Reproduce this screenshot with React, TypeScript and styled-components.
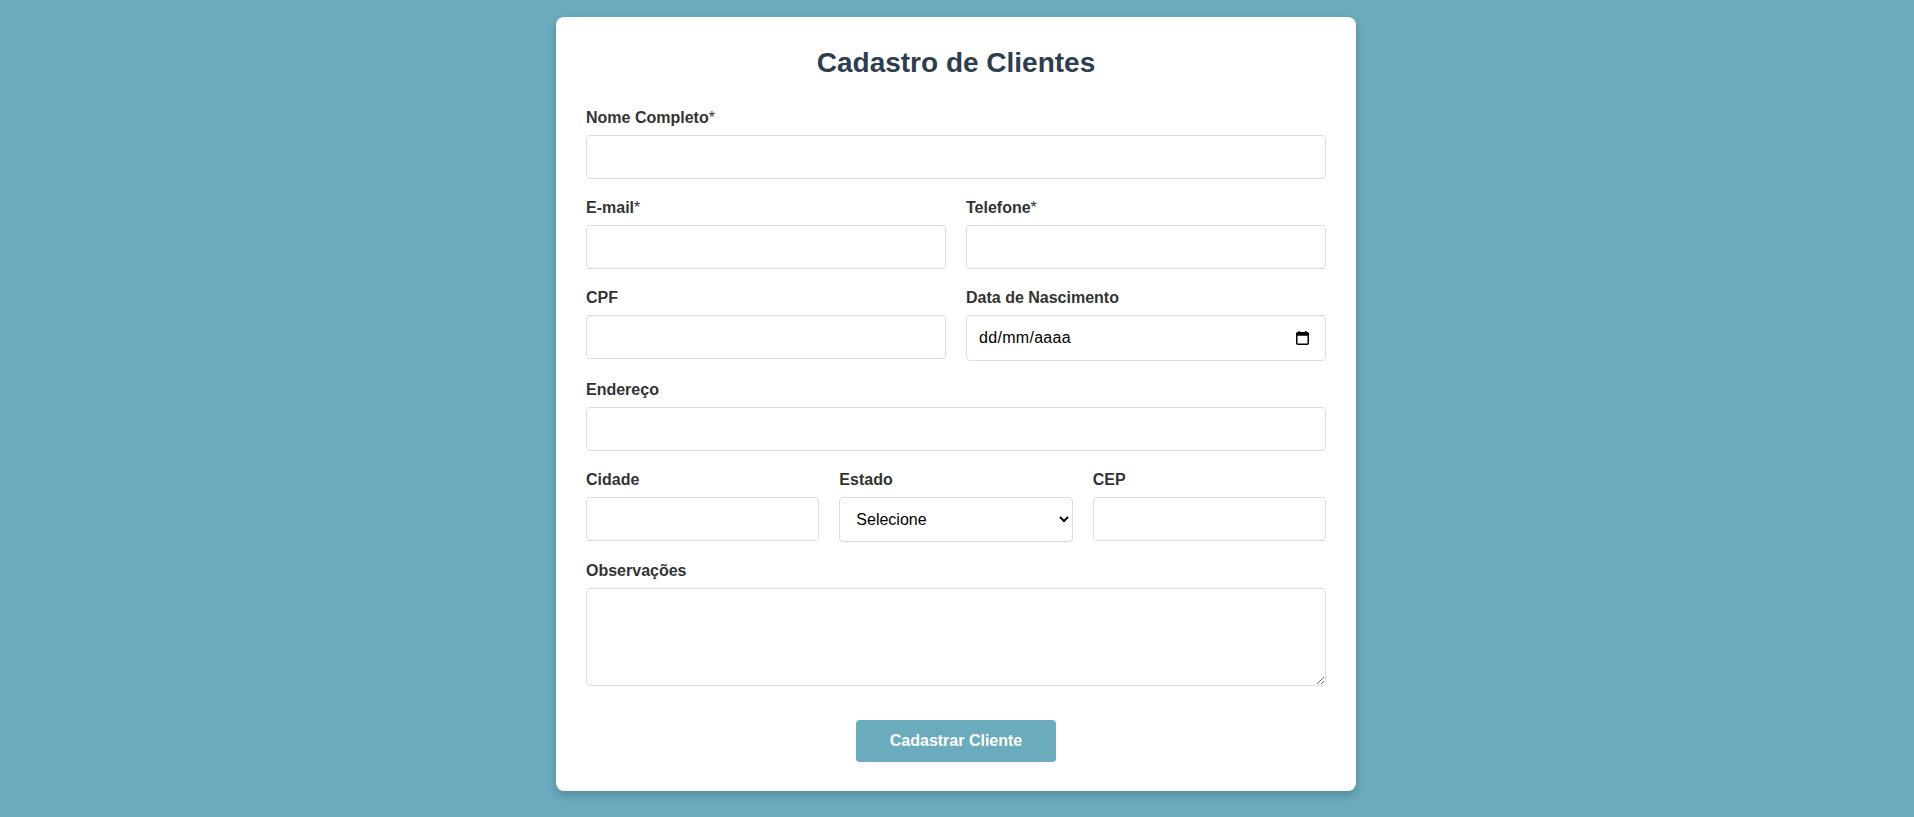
import styled, { createGlobalStyle } from "styled-components";

const GlobalStyle = createGlobalStyle`
  * {
    box-sizing: border-box;
  }
  body {
    margin: 0;
    background-color: #6aabbd;
    font-family: "Liberation Sans", Arial, sans-serif;
  }
`;

type FieldProps = {
  label: string;
  required?: boolean;
  children: React.ReactNode;
};

const Field = ({ label, required, children }: FieldProps) => (
  <Group>
    <Label>
      {label}
      {required && <Asterisk>*</Asterisk>}
    </Label>
    {children}
  </Group>
);

// campo de data com formato pt-BR fixo
const DateInput = () => (
  <DateWrap>
    <Input type="text" placeholder="dd/mm/aaaa" $tall />
    <CalendarIcon viewBox="0 0 13 14" aria-hidden="true">
      <rect x="0.75" y="1.75" width="11.5" height="11.5" rx="1" fill="none" stroke="#000" strokeWidth="1.5" />
      <rect x="0.75" y="1.75" width="11.5" height="3" fill="#000" />
      <rect x="2.5" y="0" width="1.5" height="2.5" fill="#000" />
      <rect x="9" y="0" width="1.5" height="2.5" fill="#000" />
    </CalendarIcon>
  </DateWrap>
);

const estados = ["AC", "AL", "AP", "AM", "BA", "CE", "DF", "ES", "GO", "MA", "MG", "MS", "MT", "PA", "PB", "PE", "PI", "PR", "RJ", "RN", "RO", "RR", "RS", "SC", "SE", "SP", "TO"];

const App = () => {
  return (
    <Page>
      <GlobalStyle />
      <Card>
        <Title>Cadastro de Clientes</Title>
        <form onSubmit={(e) => e.preventDefault()}>
          <Field label="Nome Completo" required>
            <Input type="text" />
          </Field>
          <Row $cols={2}>
            <Field label="E-mail" required>
              <Input type="email" />
            </Field>
            <Field label="Telefone" required>
              <Input type="tel" />
            </Field>
          </Row>
          <Row $cols={2}>
            <Field label="CPF">
              <Input type="text" />
            </Field>
            <Field label="Data de Nascimento">
              <DateInput />
            </Field>
          </Row>
          <Field label="Endereço">
            <Input type="text" />
          </Field>
          <Row $cols={3}>
            <Field label="Cidade">
              <Input type="text" />
            </Field>
            <Field label="Estado">
              <Select defaultValue="">
                <option value="">Selecione</option>
                {estados.map((uf) => (
                  <option key={uf} value={uf}>
                    {uf}
                  </option>
                ))}
              </Select>
            </Field>
            <Field label="CEP">
              <Input type="text" />
            </Field>
          </Row>
          <Field label="Observações">
            <TextArea />
          </Field>
          <Actions>
            <SubmitButton type="submit">Cadastrar Cliente</SubmitButton>
          </Actions>
        </form>
      </Card>
    </Page>
  );
};

export default App;

const Page = styled.div`
  padding: 17px 2px 26px 0;
  display: flex;
  justify-content: center;
`;

const Card = styled.div`
  width: 800px;
  background: #fff;
  border-radius: 8px;
  padding: 30px 30px 29px;
  box-shadow: 0 4px 10px rgba(0, 0, 0, 0.2);
`;

const Title = styled.h2`
  margin: 0 0 30px;
  text-align: center;
  font-size: 28px;
  font-weight: 700;
  color: #2c3e50;
`;

const Row = styled.div<{ $cols: number }>`
  display: grid;
  grid-template-columns: repeat(${(p) => p.$cols}, 1fr);
  column-gap: 20px;
`;

const Group = styled.div`
  margin-bottom: 20px;
`;

const Label = styled.label`
  display: block;
  margin-bottom: 8px;
  font-size: 16px;
  font-weight: 700;
  color: #333;
`;

const Asterisk = styled.span`
  font-weight: 400;
`;

const fieldBase = `
  display: block;
  width: 100%;
  padding: 12px;
  border: 1px solid #ddd;
  border-radius: 4px;
  font-family: "Liberation Sans", Arial, sans-serif;
  font-size: 16px;
  color: #000;
  background: #fff;
`;

const Input = styled.input<{ $tall?: boolean }>`
  ${fieldBase}
  height: ${(p) => (p.$tall ? "46px" : "44px")};
  letter-spacing: ${(p) => (p.$tall ? "0.3px" : "normal")};

  &::placeholder {
    color: #000;
    opacity: 1;
  }
`;

const DateWrap = styled.div`
  position: relative;
`;

const CalendarIcon = styled.svg`
  position: absolute;
  right: 17px;
  top: 16px;
  width: 13px;
  height: 14px;
  pointer-events: none;
`;

const Select = styled.select`
  ${fieldBase}
  height: 45px;
`;

const TextArea = styled.textarea`
  ${fieldBase}
  height: 98px;
  resize: vertical;
`;

const Actions = styled.div`
  display: flex;
  justify-content: center;
  padding-top: 14px;
`;

const SubmitButton = styled.button`
  width: 200px;
  height: 42px;
  padding: 0;
  border: none;
  border-radius: 4px;
  background-color: #6aabbd;
  color: #fff;
  font-family: "Liberation Sans", Arial, sans-serif;
  font-size: 16px;
  font-weight: 700;
  cursor: pointer;
`;
